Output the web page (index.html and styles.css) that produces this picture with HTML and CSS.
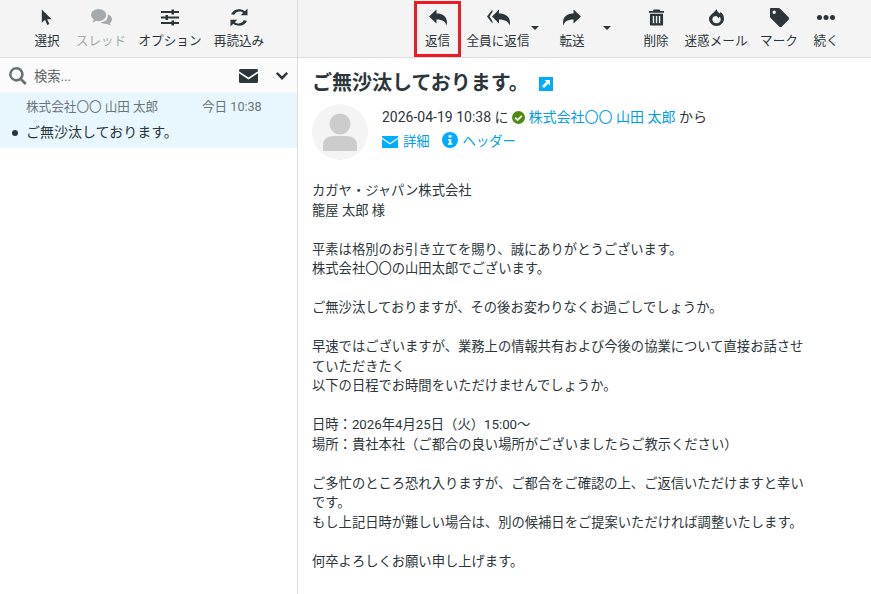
FILE: index.html
```html
<!DOCTYPE html>
<html lang="ja">
<head>
  <meta charset="UTF-8" />
  <title>メール</title>
  <link rel="stylesheet" href="styles.css">
</head>
<body>
  <div class="layout">
    <div class="col-list">
      <div class="toolbar toolbar-left">
        <a class="btn btn-select">
          <svg viewBox="0 0 16 20" width="13" height="17"><path d="M1 0v16.5l4-3.6 2.7 6.3 2.6-1.1-2.7-6.1H13z"/></svg>
          <span>選択</span>
        </a>
        <a class="btn btn-thread disabled">
          <svg viewBox="0 0 22 18" width="21" height="17"><ellipse cx="8" cy="6.5" rx="8" ry="6.3"/><path d="M3 11l-1.500 3.500 5-2.500z"/><path d="M17.500 5.500c2.700 1 4.500 3 4.500 5.300 0 1.700-1 3.100-2.400 4.100l1 2.600-3.700-1.800c-2.500.4-5.400-.4-7-2 5 .2 8.300-2.500 7.600-8.200z"/></svg>
          <span>スレッド</span>
        </a>
        <a class="btn btn-options">
          <svg viewBox="0 0 18 16" width="18" height="16"><path d="M0 1.500h18v2H0zM0 7h18v2H0zM0 12.500h18v2H0z"/><path d="M10.500 0h2.500v5h-2.500zM4.500 5.500H7v5H4.500zM10.500 11H13v5h-2.500z"/></svg>
          <span>オプション</span>
        </a>
        <a class="btn btn-refresh">
          <svg viewBox="0 0 18 18" width="18" height="18"><path d="M17.500 0v6.800h-6.800l2.500-2.500C10.500 2 6 2.800 4.300 6.300L1 5.800C3.200.8 9.700-1 14.800 2.700zM.5 18v-6.800h6.800l-2.500 2.500c2.700 2.300 7.200 1.500 8.900-2L17 12.200c-2.200 5-8.700 6.800-13.800 3.100z"/></svg>
          <span>再読込み</span>
        </a>
      </div>
      <div class="searchbar">
        <svg class="search-icon" viewBox="0 0 18 18" width="18" height="18"><path fill-rule="evenodd" d="M7.300 0a7.300 7.300 0 0 1 5.900 11.600l4.500 4.500-1.900 1.900-4.500-4.500A7.300 7.300 0 1 1 7.300 0zm0 2.500a4.800 4.800 0 1 0 0 9.600 4.800 4.800 0 0 0 0-9.600z"/></svg>
        <span class="search-text">検索...</span>
        <svg class="env-icon" viewBox="0 0 19 14" width="19" height="14"><path d="M1.500 0h16c.8 0 1.500.7 1.500 1.500v.7L9.500 8.400 0 2.200v-.7C0 .7.700 0 1.500 0z"/><path d="M0 4.200l9.500 6.200L19 4.200v8.300c0 .8-.7 1.500-1.500 1.500h-16C.7 14 0 13.300 0 12.500z"/></svg>
        <svg class="chev-icon" viewBox="0 0 12 8" width="12" height="8"><path d="M1.500 0L6 4.300 10.500 0 12 1.700 6 8 0 1.700z"/></svg>
      </div>
      <div class="msg-row">
        <div class="msg-top">
          <span class="msg-from">株式会社〇〇 山田 太郎</span>
          <span class="msg-date">今日 10:38</span>
        </div>
        <div class="msg-subject"><i class="dot"></i>ご無沙汰しております。</div>
      </div>
    </div>

    <div class="col-main">
      <div class="toolbar toolbar-right">
        <a class="btn btn-reply active">
          <svg viewBox="0 0 18 16" width="18" height="16"><path d="M7.500 0v4C13.500 4 18 6.500 18 13.500c0 1-.2 1.700-.5 2.500-.8-3.800-3.800-6-10-6v4L0 7z"/></svg>
          <span>返信</span>
        </a>
        <a class="btn btn-replyall">
          <svg viewBox="0 0 23 16" width="23" height="16"><path d="M5.500 0v2.200L2.500 7l3 4.800V14L0 7zM12 0v4c6 0 11 2.500 11 9.500 0 1-.2 1.700-.5 2.500-.8-3.800-4.300-6-10.500-6v4L5 7z"/></svg>
          <span>全員に返信</span>
        </a>
        <i class="caret caret-replyall"></i>
        <a class="btn btn-forward">
          <svg viewBox="0 0 18 16" width="18" height="16"><path d="M10.500 0v4C4.500 4 0 6.500 0 13.500c0 1 .2 1.700.5 2.500 .8-3.800 3.800-6 10-6v4L18 7z"/></svg>
          <span>転送</span>
        </a>
        <i class="caret caret-forward"></i>
        <a class="btn btn-delete">
          <svg viewBox="0 0 16 17" width="15" height="16"><path fill-rule="evenodd" d="M5 0h6l1 1.500h4v2H0v-2h4zM1 4.500h14V16a1 1 0 0 1-1 1H2a1 1 0 0 1-1-1zM4 7v7.500h1.500V7zM7.300 7v7.500h1.500V7zM10.500 7v7.500H12V7z"/></svg>
          <span>削除</span>
        </a>
        <a class="btn btn-junk">
          <svg viewBox="0 0 16 18" width="15" height="17"><path fill-rule="evenodd" d="M8 0c.6 2.500 2 3.500 3.200 4.800l1.300-1.600C14.700 5 16 7.500 16 10.300 16 14.600 12.400 18 8 18s-8-3.400-8-7.700C0 6.500 5.500 4.500 8 0zm0 7.500c-2.500 0-4.500 1.300-4.500 3.500S5.500 15 8 15s4.500-1.800 4.500-4c0-1-.4-2-1-2.800L10 9.800C9.600 8.800 8.800 8 8 7.500z"/></svg>
          <span>迷惑メール</span>
        </a>
        <a class="btn btn-mark">
          <svg viewBox="0 0 19 19" width="19" height="19"><path fill-rule="evenodd" d="M1 0h7.500c.5 0 1 .2 1.400.6l8.500 8.500c.8.800.8 2 0 2.800l-6.500 6.500c-.8.800-2 .8-2.800 0L.6 9.900C.2 9.500 0 9 0 8.500V1c0-.5.500-1 1-1zm3.200 2.500a1.700 1.700 0 1 0 0 3.400 1.700 1.700 0 0 0 0-3.400z"/></svg>
          <span>マーク</span>
        </a>
        <a class="btn btn-more">
          <svg viewBox="0 0 18 5" width="18" height="5"><circle cx="2.500" cy="2.500" r="2.500"/><circle cx="9" cy="2.500" r="2.500"/><circle cx="15.500" cy="2.500" r="2.500"/></svg>
          <span>続く</span>
        </a>
      </div>

      <div class="content">
        <h2 class="subject">ご無沙汰しております。<svg class="open-icon" viewBox="0 0 14 14" width="14" height="14"><rect width="14" height="14" fill="#00acff"/><path d="M5.500 3h5.500v5.500L9.200 6.700 5 11 3 9l4.300-4.200z" fill="#fff"/></svg></h2>
        <div class="header-row">
          <div class="avatar">
            <svg viewBox="0 0 56 56" width="56" height="56"><circle cx="28" cy="20" r="10.500" fill="#ccc"/><path d="M11 47V41c0-6 5-9 11-9h12c6 0 11 3 11 9v6z" fill="#ccc"/></svg>
          </div>
          <div class="header-info">
            <div class="line-from">
              2026-04-19 10:38 に
              <svg class="check-icon" viewBox="0 0 14 14" width="13" height="13"><circle cx="7" cy="7" r="7" fill="#4f8a10"/><path d="M3.500 7.200L6 9.700l4.500-4.500" fill="none" stroke="#fff" stroke-width="1.800"/></svg>
              <a class="link">株式会社〇〇 山田 太郎</a> から
            </div>
            <div class="line-links">
              <a class="link link-detail"><svg viewBox="0 0 16 12" width="16" height="12"><path d="M0 0h16v1.500L8 7 0 1.500z" fill="#00acff"/><path d="M0 3l8 5.500L16 3v9H0z" fill="#00acff"/></svg>詳細</a>
              <a class="link link-headers"><svg viewBox="0 0 16 16" width="16" height="16"><circle cx="8" cy="8" r="8" fill="#00acff"/><path d="M6.500 3.200h3v2.300h-3zM6 7h3.300v4.300h1v1.500H6v-1.500h1V8.500H6z" fill="#fff"/></svg>ヘッダー</a>
            </div>
          </div>
        </div>
        <div class="body-text">カガヤ・ジャパン株式会社
籠屋 太郎 様

平素は格別のお引き立てを賜り、誠にありがとうございます。
株式会社〇〇の山田太郎でございます。

ご無沙汰しておりますが、その後お変わりなくお過ごしでしょうか。

早速ではございますが、業務上の情報共有および今後の協業について直接お話させていただきたく
以下の日程でお時間をいただけませんでしょうか。

日時：2026年4月25日（火）15:00～
場所：貴社本社（ご都合の良い場所がございましたらご教示ください）

ご多忙のところ恐れ入りますが、ご都合をご確認の上、ご返信いただけますと幸いです。
もし上記日時が難しい場合は、別の候補日をご提案いただければ調整いたします。

何卒よろしくお願い申し上げます。</div>
      </div>
    </div>
  </div>
</body>
</html>
```

FILE: styles.css
```css
* {
  box-sizing: border-box;
}
html, body {
  margin: 0;
  height: 100%;
  overflow: hidden;
}
body {
  font-family: Roboto, "Noto Sans CJK JP", sans-serif;
  font-size: 13.3px;
  color: #2c363a;
  background: #fff;
}
.layout {
  display: flex;
  height: 594px;
}
.col-list {
  width: 298px;
  flex: none;
  border-right: 1px solid #ddd;
}
.col-main {
  flex: 1;
  min-width: 0;
}
.toolbar {
  display: flex;
  height: 58px;
  background: #f4f4f4;
  border-bottom: 1px solid #ddd;
}
.toolbar-left {
  padding-left: 27px;
  gap: 0;
}
.toolbar-right {
  padding-left: 116px;
}
.btn {
  position: relative;
  display: flex;
  flex-direction: column;
  align-items: center;
  height: 57px;
  padding-top: 8px;
  font-size: 12.6px;
  white-space: nowrap;
}
.btn svg {
  fill: #2c363a;
  height: 19px;
  margin-bottom: 5px;
}
.btn span {
  line-height: 18px;
}
.btn-select { width: 40px; }
.btn-thread { width: 68px; }
.btn-options { width: 70px; }
.btn-refresh { width: 68px; }
.disabled { color: #a3a9ac; }
.disabled svg { fill: #a3a9ac; }
.btn-reply { width: 47px; }
.active {
  border: 3px solid #ed1c24;
  margin-top: 1px;
  height: 56px;
  padding-top: 4px;
}
.btn-replyall { width: 74px; }
.btn-forward { width: 70px; margin-left: 2px; }
.btn-delete { width: 50px; margin-left: 24px; }
.btn-junk { width: 70px; }
.btn-mark { width: 56px; }
.btn-more { width: 38px; }
.caret {
  width: 0;
  height: 0;
  margin-top: 26px;
  border: 4px solid transparent;
  border-top: 4px solid #2c363a;
  margin-left: -4px;
  margin-right: -4px;
}
.searchbar {
  display: flex;
  align-items: center;
  height: 35px;
  padding: 0 9px 0 9px;
  background: #fbfbfb;
}
.search-icon { fill: #6a6f72; flex: none; }
.search-text {
  margin-left: 7px;
  flex: 1;
  color: #5c6366;
}
.env-icon { fill: #2c363a; margin-right: 18px; }
.chev-icon { fill: #2c363a; }
.msg-row {
  height: 55px;
  background: #e8f6fd;
  padding: 4px 0 0 26px;
}
.msg-top {
  display: flex;
  line-height: 20px;
  color: #6b7579;
  font-size: 12.6px;
}
.msg-from { width: 176px; }
.msg-subject {
  position: relative;
  margin-top: 5px;
  font-size: 14px;
  line-height: 20px;
}
.dot {
  position: absolute;
  left: -14px;
  top: 8px;
  width: 6px;
  height: 6px;
  border-radius: 50%;
  background: #2c363a;
}
.content {
  padding: 9px 0 0 14px;
}
.subject {
  margin: 0;
  font-size: 20px;
  font-weight: 700;
  line-height: 32px;
  color: #2c363a;
}
.open-icon {
  margin-left: 10px;
  vertical-align: -1px;
}
.header-row {
  display: flex;
  margin-top: 5px;
}
.avatar {
  width: 56px;
  height: 56px;
  border-radius: 50%;
  background: #f4f4f4;
  flex: none;
  overflow: hidden;
}
.header-info {
  margin-left: 14px;
  font-size: 14px;
}
.line-from {
  line-height: 26px;
  margin-top: 0;
}
.check-icon {
  vertical-align: -2px;
}
.link {
  color: #00a0e8;
}
.line-links {
  display: flex;
  gap: 12px;
  line-height: 24px;
  font-size: 13.3px;
}
.link svg {
  margin-right: 5px;
  vertical-align: -2px;
}
.body-text {
  margin-top: 21px;
  width: 500px;
  font-size: 13.3px;
  line-height: 19.5px;
  white-space: pre-wrap;
}
```
